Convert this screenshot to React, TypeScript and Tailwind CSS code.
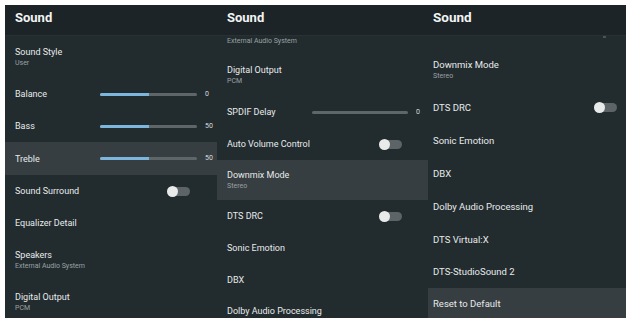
import React from "react";

type Row =
  | { kind: "text"; title: string; sub?: string; active?: boolean; h?: string }
  | { kind: "slider"; title: string; value: number; fill: number; active?: boolean; h?: string }
  | { kind: "toggle"; title: string; active?: boolean; h?: string };

const panelOne: Row[] = [
  { kind: "text", title: "Sound Style", sub: "User" },
  { kind: "slider", title: "Balance", value: 0, fill: 50 },
  { kind: "slider", title: "Bass", value: 50, fill: 50 },
  { kind: "slider", title: "Treble", value: 50, fill: 50, active: true, h: "h-[33px]" },
  { kind: "toggle", title: "Sound Surround" },
  { kind: "text", title: "Equalizer Detail" },
  { kind: "text", title: "Speakers", sub: "External Audio System" },
  { kind: "text", title: "Digital Output", sub: "PCM" },
];

const panelTwo: Row[] = [
  { kind: "text", title: "Digital Output", sub: "PCM" },
  { kind: "slider", title: "SPDIF Delay", value: 0, fill: 0 },
  { kind: "toggle", title: "Auto Volume Control" },
  { kind: "text", title: "Downmix Mode", sub: "Stereo", active: true, h: "h-[40px]" },
  { kind: "toggle", title: "DTS DRC" },
  { kind: "text", title: "Sonic Emotion" },
  { kind: "text", title: "DBX" },
  { kind: "text", title: "Dolby Audio Processing", h: "h-[29px]" },
];

const panelThree: Row[] = [
  { kind: "text", title: "Downmix Mode", sub: "Stereo" },
  { kind: "toggle", title: "DTS DRC", h: "h-[33px]" },
  { kind: "text", title: "Sonic Emotion", h: "h-[33px]" },
  { kind: "text", title: "DBX", h: "h-[33px]" },
  { kind: "text", title: "Dolby Audio Processing", h: "h-[33px]" },
  { kind: "text", title: "DTS Virtual:X", h: "h-[33px]" },
  { kind: "text", title: "DTS-StudioSound 2", h: "h-[32px]" },
  { kind: "text", title: "Reset to Default", active: true, h: "h-[32px]" },
];

const Toggle = () => (
  <div className="relative w-[22px] h-[9px] rounded-full bg-[#5d6467]">
    <div className="absolute -left-[1px] -top-[1px] w-[11px] h-[11px] rounded-full bg-[#e9ebeb]" />
  </div>
);

const Slider = ({ fill, value }: { fill: number; value: number }) => (
  <div className="flex items-center flex-1">
    <div className="flex-1 h-[3px] rounded-full bg-[#5f6669] overflow-hidden">
      <div className="h-full bg-[#7db6dc]" style={{ width: `${fill}%` }} />
    </div>
    <span className="w-[17px] pl-[8px] text-[7px] text-[#d9dcdd]">{value}</span>
  </div>
);

const ListRow = ({ row, pad, big }: { row: Row; pad: string; big?: boolean }) => {
  const bg = row.active ? "bg-[#363e41]" : "";
  const titleCls = big
    ? "text-[9.5px] leading-[12px] text-[#e8eaeb] whitespace-nowrap"
    : "text-[9px] leading-[12px] text-[#e8eaeb] whitespace-nowrap";
  if (row.kind === "text") {
    const height = row.h ?? (row.sub ? "h-[42px]" : "h-[32px]");
    return (
      <div className={`${bg} ${pad} shrink-0 flex flex-col justify-center ${height}`}>
        <span className={titleCls}>{row.title}</span>
        {row.sub && <span className="text-[7px] leading-[11px] text-[#9ba1a4]">{row.sub}</span>}
      </div>
    );
  }
  return (
    <div
      className={`${bg} ${pad} shrink-0 flex items-center ${row.h ?? "h-[32px]"} ${
        row.kind === "slider" ? "!pr-[3px]" : ""
      }`}
    >
      <span className={`w-[85px] shrink-0 ${titleCls}`}>{row.title}</span>
      {row.kind === "slider" ? (
        <Slider fill={row.fill} value={row.value} />
      ) : (
        <div className={`flex-1 flex ${big ? "pl-[77px]" : "pl-[68px]"}`}>
          <Toggle />
        </div>
      )}
    </div>
  );
};

const Header = ({ pad, big }: { pad: string; big?: boolean }) => (
  <div className={`h-[31px] shrink-0 bg-[#1c2427] ${pad} border-b border-[#283235]`}>
    <span className={`${big ? "text-[13.5px]" : "text-[13px]"} font-bold leading-[21px] text-[#f2f3f3]`}>
      Sound
    </span>
  </div>
);

export default function App() {
  return (
    <div
      className="w-[626px] h-[318px] bg-white pt-[5px] pl-[5px] overflow-hidden"
      style={{ fontFamily: "Roboto, 'Liberation Sans', sans-serif" }}
    >
      <div className="flex h-[313px] bg-[#222c2f] overflow-hidden">
        <div className="w-[212px] shrink-0 flex flex-col overflow-hidden">
          <Header pad="px-[10px]" />
          {panelOne.map((r) => (
            <ListRow key={r.title} row={r} pad="px-[10px]" />
          ))}
        </div>

        <div className="w-[211px] shrink-0 flex flex-col overflow-hidden">
          <Header pad="px-[10px]" />
          <div className="h-[18px] shrink-0 px-[10px] pt-[1px]">
            <span className="block text-[7px] leading-[8px] text-[#9ba1a4]">External Audio System</span>
          </div>
          {panelTwo.map((r) => (
            <ListRow key={r.title} row={r} pad="px-[10px]" />
          ))}
        </div>

        <div className="flex-1 flex flex-col overflow-hidden">
          <Header pad="px-[5px]" big />
          <div className="h-[13px] shrink-0 flex justify-end pr-[20px]">
            <div className="w-[3px] h-[2px] bg-[#4a5356]" />
          </div>
          {panelThree.map((r) => (
            <ListRow key={r.title} row={r} pad="px-[5px]" big />
          ))}
        </div>
      </div>
    </div>
  );
}
